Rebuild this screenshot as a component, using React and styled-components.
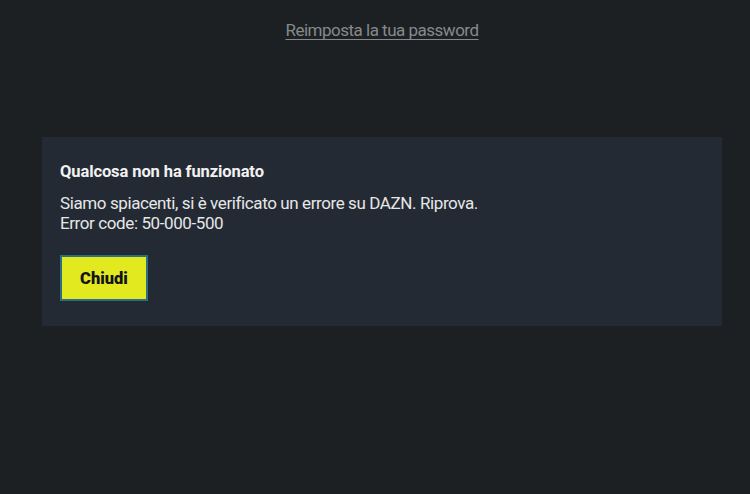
import React from "react";
import styled, { createGlobalStyle } from "styled-components";

const Global = createGlobalStyle`
  html, body { margin: 0; padding: 0; background: #1c2022; }
  body { font-family: Roboto, "Liberation Sans", sans-serif; }
`;

const Page = styled.div`
  width: 750px;
  height: 494px;
  background: #1c2022;
  display: flex;
  flex-direction: column;
  overflow: hidden;
`;

const LinkRow = styled.div`
  display: flex;
  justify-content: center;
  padding: 20px 0 0 14px;
  height: 118px;
  box-sizing: border-box;
`;

const ResetLink = styled.a`
  color: #86898c;
  font-size: 17px;
  letter-spacing: -0.5px;
  text-decoration: underline;
  text-underline-offset: 3px;
  cursor: pointer;
`;

const Panel = styled.section`
  margin: 19px 28px 0 42px;
  height: 189px;
  background: #242a33;
  padding: 25px 18px 0;
  box-sizing: border-box;
`;

const Title = styled.h2`
  margin: 0;
  color: #f2f2f2;
  font-size: 16.5px;
  font-weight: 700;
  line-height: 20px;
  letter-spacing: -0.1px;
`;

const Message = styled.p`
  margin: 11px 0 0;
  color: #e6e7e8;
  font-size: 17px;
  line-height: 20px;
  letter-spacing: -0.4px;
`;

const CloseButton = styled.button`
  margin-top: 22px;
  width: 88px;
  height: 46px;
  background: #e2e91f;
  border: 2px solid #2b6f80;
  color: #121418;
  font-family: Roboto, "Liberation Sans", sans-serif;
  font-size: 16.5px;
  font-weight: 900;
  cursor: pointer;
  padding: 0;
`;

export default function App() {
  return (
    <Page>
      <Global />
      <LinkRow>
        <ResetLink>Reimposta la tua password</ResetLink>
      </LinkRow>
      <Panel>
        <Title>Qualcosa non ha funzionato</Title>
        <Message>
          Siamo spiacenti, si è verificato un errore su DAZN. Riprova.
          <br />
          Error code: 50-000-500
        </Message>
        <CloseButton>Chiudi</CloseButton>
      </Panel>
    </Page>
  );
}
